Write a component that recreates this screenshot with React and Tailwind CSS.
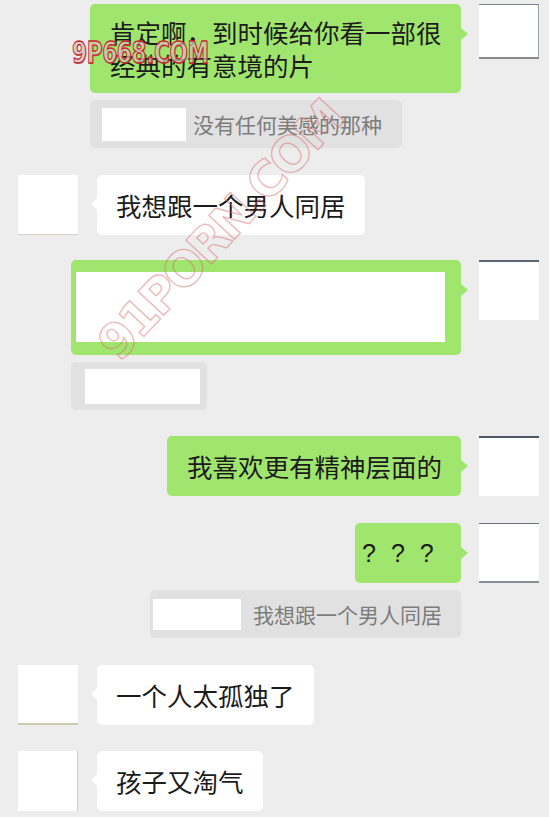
import React from "react";

const GREEN = "bg-[#a0e56e]";

function RightTail() {
  return (
    <div className="absolute right-[-7px] top-[24px] w-0 h-0 border-y-[6px] border-y-transparent border-l-[7px] border-l-[#a0e56e]" />
  );
}

function LeftTail() {
  return (
    <div className="absolute left-[-6px] top-[23px] w-0 h-0 border-y-[6px] border-y-transparent border-r-[6px] border-r-white" />
  );
}

function Avatar({ className = "" }) {
  return <div className={"w-[60px] h-[60px] bg-white shrink-0 " + className} />;
}

function RightRow({ children, mt, avatarClass = "" }) {
  return (
    <div className={"flex justify-end items-start pr-[10px] gap-[18px] " + mt}>
      {children}
      <Avatar className={avatarClass} />
    </div>
  );
}

function LeftRow({ text, mt, avatarClass = "" }) {
  return (
    <div className={"flex items-start pl-[18px] gap-[19px] " + mt}>
      <Avatar className={avatarClass} />
      <div className="relative bg-white rounded-[5px] h-[60px] flex items-center pl-[19px] pr-[19px] text-[25.5px] leading-[34px] text-[#1b1b1b]">
        <LeftTail />
        {text}
      </div>
    </div>
  );
}

function Quote({ className, whiteClass, text, textClass = "ml-[12px]" }) {
  return (
    <div className={"h-[48px] bg-[#e1e1e1] rounded-[5px] flex items-center " + className}>
      <div className={"bg-white shrink-0 " + whiteClass} />
      {text && (
        <span className={"text-[21px] leading-[28px] text-[#7c7c7c] whitespace-nowrap " + textClass}>{text}</span>
      )}
    </div>
  );
}

export default function App() {
  return (
    <div className="relative w-[549px] h-[817px] overflow-hidden bg-[#ededed] font-['Noto_Sans_CJK_SC','Noto_Sans',sans-serif]">
      <div className="flex flex-col pt-[4px]">
        {/* Row 1 */}
        <div className="flex justify-end items-start pr-[10px] gap-[18px]">
          <div className={"relative w-[371px] rounded-[5px] pl-[20px] pr-[16px] pt-[11px] pb-[12px] text-[25.5px] leading-[33px] text-[#1b1b1b] " + GREEN}>
            <RightTail />
            肯定啊，到时候给你看一部很经典的有意境的片
          </div>
          <div className="w-[60px] h-[55px] bg-white border-t border-b-2 border-r border-t-[#7a7f8a] border-b-[#8a8a8a] border-r-[#9aa0a8]" />
        </div>

        {/* Quote 1 */}
        <Quote
          className="mt-[7px] ml-[90px] w-[312px] pl-[12px]"
          whiteClass="w-[84px] h-[33px]"
          text="没有任何美感的那种"
          textClass="ml-[7px]"
        />

        {/* Row 2 */}
        <LeftRow text="我想跟一个男人同居" mt="mt-[27px]" avatarClass="border-b border-b-[#d8d4c4]" />

        {/* Row 3 big green */}
        <RightRow mt="mt-[25px]" avatarClass="border-t-2 border-t-[#5c6578]">
          <div className={"relative w-[390px] h-[95px] rounded-[5px] pl-[5px] pr-[16px] pt-[12px] pb-[13px] " + GREEN}>
            <RightTail />
            <div className="w-full h-full bg-white" />
          </div>
        </RightRow>

        {/* Quote 2 */}
        <Quote className="mt-[7px] ml-[71px] w-[136px] pl-[14px]" whiteClass="w-[115px] h-[35px]" />

        {/* Row 4 */}
        <RightRow mt="mt-[26px]" avatarClass="border-t-2 border-t-[#4d5568]">
          <div className={"relative h-[60px] rounded-[5px] flex items-center pl-[20px] pr-[19px] text-[25.5px] leading-[34px] text-[#1b1b1b] " + GREEN}>
            <RightTail />
            我喜欢更有精神层面的
          </div>
        </RightRow>

        {/* Row 5 */}
        <RightRow mt="mt-[27px]" avatarClass="border-t border-b-2 border-t-[#6a7080] border-b-[#8a8f98]">
          <div className={"relative h-[60px] w-[106px] rounded-[5px] flex items-center pl-[7px] text-[#1b1b1b] " + GREEN}>
            <RightTail />
            <span className="font-['Liberation_Sans',sans-serif] text-[25px] leading-[34px] tracking-[15px]">???</span>
          </div>
        </RightRow>

        {/* Quote 3 */}
        <Quote
          className="mt-[7px] ml-[150px] w-[311px] pl-[3px]"
          whiteClass="w-[88px] h-[31px]"
          text="我想跟一个男人同居"
        />

        {/* Row 6 */}
        <LeftRow text="一个人太孤独了" mt="mt-[27px]" avatarClass="border-b-2 border-b-[#cfc9b0]" />

        {/* Row 7 */}
        <LeftRow text="孩子又淘气" mt="mt-[26px]" avatarClass="border-r border-r-[#d0ccc0]" />
      </div>

      {/* Watermark: 9P668.COM */}
      <div className="absolute left-[72px] top-[37px] origin-left scale-x-[0.72] text-[30px] leading-[32px] font-bold tracking-[-0.5px] font-['DejaVu_Sans',sans-serif] text-[rgba(255,255,255,0.55)] [-webkit-text-stroke:1.3px_#c8262c] [text-shadow:1px_1px_0_rgba(90,20,20,0.45)] pointer-events-none whitespace-nowrap">
        9P668.COM
      </div>

      {/* Watermark: 91PORN.COM */}
      <div className="absolute left-[20px] top-[200px] w-[400px] h-[60px] flex items-center justify-center text-[48px] leading-[60px] font-bold tracking-[-3px] font-['DejaVu_Sans',sans-serif] text-transparent [-webkit-text-stroke:1.3px_rgba(215,110,110,0.5)] -rotate-[47deg] pointer-events-none whitespace-nowrap">
        91PORN.COM
      </div>
    </div>
  );
}
